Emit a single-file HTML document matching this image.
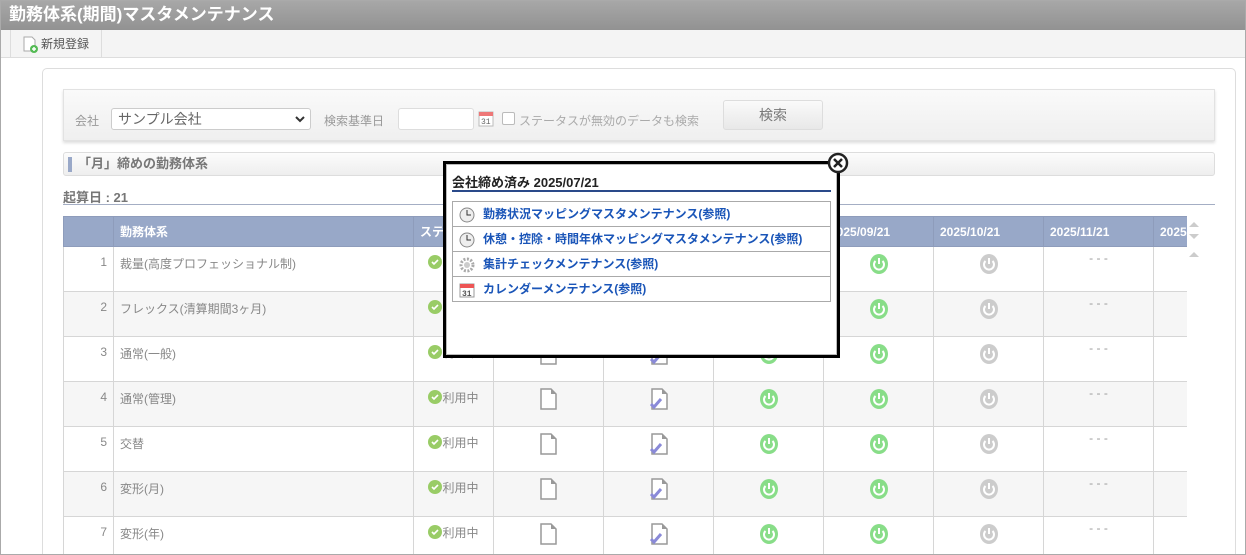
<!DOCTYPE html>
<html><head><meta charset="utf-8"><style>
*{box-sizing:border-box;margin:0;padding:0}
html,body{width:1246px;height:555px;overflow:hidden}
body{background:#fff;font-family:"Liberation Sans","Noto Sans CJK JP",sans-serif;position:relative}
.abs{position:absolute}
.frame{left:0;top:0;width:1246px;height:555px;border:1px solid #aaa;z-index:50;pointer-events:none}
.title{left:0;top:0;width:1246px;height:30px;background:linear-gradient(#a8a8a8,#929292);color:#fff;font-weight:bold;font-size:17px;line-height:30px;padding-left:9px}
.tool{left:0;top:30px;width:1246px;height:28px;background:#f4f4f4;border-bottom:1px solid #ddd}
.tbtn{left:10px;top:30px;width:92px;height:28px;border-left:1px solid #ddd;border-right:1px solid #ddd;font-size:12px;color:#555;line-height:28px;padding-left:30px}
.panel{left:42px;top:68px;width:1194px;height:487px;border:1px solid #ddd;border-bottom:none;border-radius:5px 5px 0 0}
.search{left:63px;top:89px;width:1152px;height:52px;background:linear-gradient(#fafafa,#efefef);border:1px solid #e2e2e2;box-shadow:0 2px 3px #ddd}
.lbl{font-size:12px;color:#999}
.sec{left:63px;top:152px;width:1152px;height:24px;border:1px solid #ddd;border-radius:3px;background:linear-gradient(#fcfcfc,#eee);font-size:13px;color:#777;line-height:22px;padding-left:14px;font-weight:bold}
.sec:before{content:"";position:absolute;left:4px;top:4px;width:4px;height:15px;background:#99a8c8}
table{border-collapse:collapse;table-layout:fixed}
td,th{border:1px solid #d6d6d6;font-size:12px;color:#888;vertical-align:top}
th{background:#98a8c8;color:#fff;height:30px;text-align:left;padding-left:6px;border-color:#8e9cbb;vertical-align:middle}
td{height:45px;padding-top:8px}
tr.g td{background:#f6f6f6}
.c{text-align:center}
.pop{left:443px;top:161px;width:397px;height:197px;border:3px solid #000;background:#fff;box-shadow:inset 0 0 0 1px #bbb}
.link{height:25px;border-bottom:1px solid #aaa;font-size:12px;color:#1a55b8;font-weight:bold;line-height:24px;padding-left:30px;position:relative}
.link svg{position:absolute;left:6px;top:5px}
</style></head><body>
<div class="abs title">勤務体系(期間)マスタメンテナンス</div>
<div class="abs tool"></div>
<div class="abs tbtn"><svg class="abs" style="left:11px;top:6px" width="16" height="17"><path d="M2 1h8l3 3v11H2z" fill="#fff" stroke="#aaa"/><circle cx="12" cy="13" r="4" fill="#5b5"/><path d="M10 13h4M12 11v4" stroke="#fff" stroke-width="1.5"/></svg>新規登録</div>
<div class="abs panel"></div>
<div class="abs search">
<span class="abs lbl" style="left:11px;top:22px">会社</span>
<div class="abs" style="left:47px;top:18px;width:200px;height:22px;border:1px solid #ccc;border-radius:3px;background:#fff;font-size:14px;color:#666;padding-left:6px;line-height:20px">サンプル会社<svg class="abs" style="right:5px;top:7px" width="10" height="7"><path d="M1 1l4 4 4-4" stroke="#333" stroke-width="2" fill="none"/></svg></div>
<span class="abs lbl" style="left:260px;top:22px">検索基準日</span>
<div class="abs" style="left:334px;top:18px;width:76px;height:22px;border:1px solid #ddd;border-radius:3px;background:#fff"></div>
<svg class="abs" style="left:414px;top:19px" width="16" height="18"><rect x="1" y="3" width="14" height="14" fill="#fff" stroke="#bbb"/><rect x="1" y="3" width="14" height="4" fill="#e77"/><text x="3" y="15" font-size="8" fill="#666" font-family="Liberation Mono">31</text></svg>
<div class="abs" style="left:438px;top:22px;width:13px;height:13px;border:1px solid #bbb;border-radius:2px;background:#fff"></div>
<span class="abs lbl" style="left:455px;top:22px;font-size:12px;color:#aaa">ステータスが無効のデータも検索</span>
<div class="abs" style="left:659px;top:10px;width:100px;height:30px;border:1px solid #ddd;border-radius:3px;background:linear-gradient(#fafafa,#e8e8e8);font-size:14px;color:#777;text-align:center;line-height:28px">検索</div>
</div>
<div class="abs sec">「月」締めの勤務体系</div>
<div class="abs" style="left:63px;top:187px;font-size:13px;color:#777;font-weight:bold">起算日 : 21</div>
<div class="abs" style="left:63px;top:204px;width:1152px;height:1px;background:#a4aec4"></div>
<div class="abs" style="left:63px;top:216px;width:1124px;height:339px;overflow:hidden">
<table style="width:1200px">
<colgroup><col style="width:50px"><col style="width:300px"><col style="width:80px"><col style="width:110px"><col style="width:110px"><col style="width:110px"><col style="width:110px"><col style="width:110px"><col style="width:110px"><col style="width:110px"></colgroup>
<tr><th></th><th>勤務体系</th><th>ステータス</th><th>2025/06/21</th><th>2025/07/21</th><th>2025/08/21</th><th>2025/09/21</th><th>2025/10/21</th><th>2025/11/21</th><th>2025/12/21</th></tr>
</table></div>
<svg class="abs" style="left:1188px;top:220px" width="12" height="40"><path d="M1 7l5-5 5 5z" fill="#ccc"/><path d="M1 14l5 5 5-5z" fill="#ccc"/><path d="M1 37l5-5 5 5z" fill="#ccc"/></svg>
<div class="abs pop">
<div style="margin:8px 6px 0 6px;border-bottom:2px solid #2a4a8a;font-size:13px;font-weight:bold;color:#222;height:20px">会社締め済み 2025/07/21</div>
<div style="margin:9px 6px 0 6px;border:1px solid #aaa;border-bottom:none">
<div class="link"><svg width="16" height="16"><circle cx="8" cy="8" r="7" fill="#eee" stroke="#888"/><path d="M8 3v5h4" stroke="#333" fill="none"/></svg>勤務状況マッピングマスタメンテナンス(参照)</div>
<div class="link"><svg width="16" height="16"><circle cx="8" cy="8" r="7" fill="#eee" stroke="#888"/><path d="M8 3v5h4" stroke="#333" fill="none"/></svg>休憩・控除・時間年休マッピングマスタメンテナンス(参照)</div>
<div class="link"><svg width="16" height="16"><circle cx="8" cy="8" r="6" fill="none" stroke="#aaa" stroke-width="3" stroke-dasharray="2 1.5"/><circle cx="8" cy="8" r="3" fill="#ccc"/></svg>集計チェックメンテナンス(参照)</div>
<div class="link"><svg width="16" height="16"><rect x="1" y="2" width="14" height="13" fill="#fff" stroke="#999"/><rect x="1" y="2" width="14" height="4" fill="#e55"/><text x="3" y="14" font-size="8" fill="#555" font-family="Liberation Mono">31</text></svg>カレンダーメンテナンス(参照)</div>
</div></div>
<svg class="abs" style="left:827px;top:152px" width="22" height="22"><circle cx="11" cy="11" r="9" fill="#fff" stroke="#222" stroke-width="2.5"/><path d="M7 7l8 8M15 7l-8 8" stroke="#222" stroke-width="2.5"/></svg>
<div class="abs frame"></div>
<script>
var names=["裁量(高度プロフェッショナル制)","フレックス(清算期間3ヶ月)","通常(一般)","通常(管理)","交替","変形(月)","変形(年)"];
var ok='<svg width="14" height="14" style="vertical-align:-2px"><circle cx="7" cy="7" r="7" fill="#9c6"/><path d="M4 7l2 2 4-4" stroke="#fff" stroke-width="1.6" fill="none"/></svg>';
var doc='<svg width="18" height="22"><path d="M1 1h10l5 5v15H1z" fill="#fff" stroke="#999" stroke-width="1.5"/><path d="M11 1v5h5" fill="#999"/></svg>';
var chk='<svg width="18" height="22"><path d="M2 1h10l5 5v15H2z" fill="#fff" stroke="#999" stroke-width="1.5"/><path d="M12 1v5h5" fill="#999"/><path d="M1 16l3 3 7-8" stroke="#8a8ad8" stroke-width="3" fill="none"/></svg>';
function pw(c){return '<svg width="20" height="22"><ellipse cx="10" cy="11" rx="9" ry="10" fill="'+c+'"/><path d="M6.5 8a5 5 0 1 0 7 0" stroke="#fff" stroke-width="2" fill="none"/><path d="M10 5v6" stroke="#fff" stroke-width="2"/></svg>';}
var h="";
for(var i=0;i<7;i++){h+='<tr'+(i%2?' class="g"':'')+'><td style="text-align:right;padding-right:6px">'+(i+1)+'</td><td style="padding-left:6px">'+names[i]+'</td><td class="c" style="padding-top:7px">'+ok+'利用中</td><td class="c" style="padding-top:6px">'+doc+'</td><td class="c" style="padding-top:6px">'+chk+'</td><td class="c" style="padding-top:6px">'+pw('#8d8')+'</td><td class="c" style="padding-top:6px">'+pw('#8d8')+'</td><td class="c" style="padding-top:6px">'+pw('#ccc')+'</td><td class="c" style="padding-top:4px;color:#999">- - -</td><td></td></tr>';}
document.querySelector('table tbody').insertAdjacentHTML('beforeend',h);
</script>
</body></html>
